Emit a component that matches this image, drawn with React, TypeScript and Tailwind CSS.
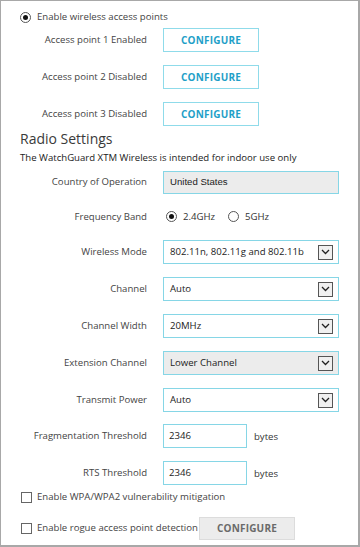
import React from 'react';

const font = { fontFamily: '"Open Sans", "Noto Sans", sans-serif' };

function Radio({ on }: { on?: boolean }) {
  return (
    <span className="w-[11px] h-[11px] rounded-full border border-[#555] bg-white flex items-center justify-center shrink-0">
      {on && <span className="w-[5px] h-[5px] rounded-full bg-[#111]" />}
    </span>
  );
}

function Check() {
  return <span className="w-[11px] h-[11px] border border-[#666] bg-white shrink-0" />;
}

function Arrow() {
  return (
    <span className="w-[15px] h-[15px] border border-[#555] bg-[#f0f0f0] flex items-center justify-center">
      <svg width="9" height="6" viewBox="0 0 9 6">
        <path d="M1 1 L4.5 4.5 L8 1" fill="none" stroke="#222" strokeWidth="1.3" />
      </svg>
    </span>
  );
}

function Row({ label, className, children }: { label: string; className?: string; children: React.ReactNode }) {
  return (
    <div className={`flex items-center h-[24px] ${className ?? ''}`}>
      <div className="w-[146px] text-right text-[#444] whitespace-nowrap">{label}</div>
      <div className="ml-[16px] flex items-center h-full">{children}</div>
    </div>
  );
}

function Select({ value, gray }: { value: string; gray?: boolean }) {
  return (
    <div
      className={`w-[176px] h-[24px] border border-[#86d6e6] flex items-center justify-between pl-[6px] pr-[5px] ${gray ? 'bg-[#ececec]' : 'bg-white'}`}
    >
      <span className="text-[#222]">{value}</span>
      <Arrow />
    </div>
  );
}

function ConfigBtn() {
  return (
    <div className="w-[96px] h-[24px] border border-[#8fdbea] bg-white flex items-center justify-center text-[#1f9fc8] font-bold text-[10px] tracking-[0.2px]">
      CONFIGURE
    </div>
  );
}

export default function App() {
  return (
    <div
      style={font}
      className="w-[360px] h-[547px] bg-white border-l border-t border-r-2 border-b-2 border-[#a8a8a8] text-[9.6px] text-[#333] flex flex-col"
    >
      {/* wireless access points */}
      <div className="flex items-center h-[14px] mt-[9px] ml-[19px] gap-[6px]">
        <Radio on />
        <span className="text-[#444]">Enable wireless access points</span>
      </div>
      <Row label="Access point 1 Enabled" className="mt-[4px]">
        <ConfigBtn />
      </Row>
      <Row label="Access point 2 Disabled" className="mt-[13px]">
        <ConfigBtn />
      </Row>
      <Row label="Access point 3 Disabled" className="mt-[13px]">
        <ConfigBtn />
      </Row>

      {/* radio settings */}
      <div className="mt-[3px] ml-[19px] text-[14px] leading-[20px] text-[#3a3a3a]">Radio Settings</div>
      <div className="mt-[2px] ml-[19px] leading-[14px] text-[#222]">
        The WatchGuard XTM Wireless is intended for indoor use only
      </div>

      <Row label="Country of Operation" className="mt-[6px] !h-[23px]">
        <div
          className="w-[176px] h-[23px] border border-[#86d6e6] bg-[#ececec] flex items-center pl-[6px] text-[#222]"
          style={{ fontFamily: '"Liberation Sans", Arial, sans-serif' }}
        >
          United States
        </div>
      </Row>
      <Row label="Frequency Band" className="mt-[11px]">
        <div className="flex items-center gap-[6px] ml-[3px] text-[#333]">
          <Radio on />
          <span>2.4GHz</span>
          <span className="w-[1px]" />
          <Radio />
          <span>5GHz</span>
        </div>
      </Row>
      <Row label="Wireless Mode" className="mt-[11px]">
        <Select value="802.11n, 802.11g and 802.11b" />
      </Row>
      <Row label="Channel" className="mt-[13px]">
        <Select value="Auto" />
      </Row>
      <Row label="Channel Width" className="mt-[13px]">
        <Select value="20MHz" />
      </Row>
      <Row label="Extension Channel" className="mt-[13px]">
        <Select value="Lower Channel" gray />
      </Row>
      <Row label="Transmit Power" className="mt-[13px]">
        <Select value="Auto" />
      </Row>
      <Row label="Fragmentation Threshold" className="mt-[12px]">
        <div className="w-[84px] h-[24px] border border-[#86d6e6] bg-white flex items-center pl-[5px] text-[#222]">
          2346
        </div>
        <span className="ml-[7px] mt-[2px] text-[#333]">bytes</span>
      </Row>
      <Row label="RTS Threshold" className="mt-[13px]">
        <div className="w-[84px] h-[24px] border border-[#86d6e6] bg-white flex items-center pl-[5px] text-[#222]">
          2346
        </div>
        <span className="ml-[7px] mt-[2px] text-[#333]">bytes</span>
      </Row>

      {/* options */}
      <div className="flex items-center h-[14px] mt-[5px] ml-[20px] gap-[5px]">
        <Check />
        <span className="text-[#444]">Enable WPA/WPA2 vulnerability mitigation</span>
      </div>
      <div className="flex items-center h-[23px] mt-[13px] ml-[20px] gap-[5px]">
        <Check />
        <span className="text-[#444] whitespace-nowrap">Enable rogue access point detection</span>
        <div className="ml-[-4px] w-[96px] h-[23px] shrink-0 border border-[#dcdcdc] bg-[#ececec] flex items-center justify-center text-[#6a6a6a] font-bold text-[10px] tracking-[0.2px]">
          CONFIGURE
        </div>
      </div>
    </div>
  );
}
